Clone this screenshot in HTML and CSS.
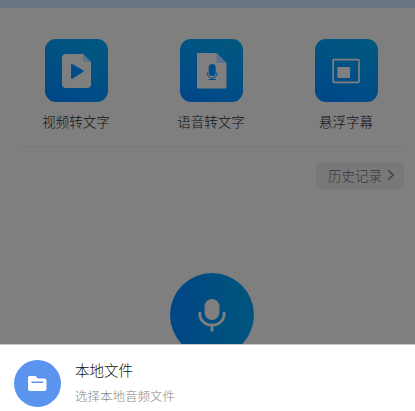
FILE: index.html
```html
<!DOCTYPE html>
<html lang="zh-CN">
<head>
<meta charset="utf-8">
<title>语音转文字</title>
<link rel="stylesheet" href="styles.css">
</head>
<body>
<div class="screen">
  <div class="strip"></div>
  <main class="content">
    <section class="tools">
      <div class="tool">
        <svg class="tile" viewBox="0 0 63 63">
          <path class="paper" d="M21 15H38L46 23V45a4 4 0 0 1-4 4H21a4 4 0 0 1-4-4V19a4 4 0 0 1 4-4Z"/>
          <path class="fold" d="M38 15L46 23H41a3 3 0 0 1-3-3Z"/>
          <path class="mark" d="M26 26.2Q26 24.3 27.7 25.2L38 31.3Q39.2 32.2 38 33.1L27.7 39.6Q26 40.5 26 38.7Z"/>
        </svg>
        <span class="label">视频转文字</span>
      </div>
      <div class="tool">
        <svg class="tile" viewBox="0 0 63 63">
          <path class="paper" d="M18 14H36.5L46.5 24V48.5a1 1 0 0 1-1 1H18a1 1 0 0 1-1-1V15a1 1 0 0 1 1-1Z"/>
          <path class="fold" d="M36.5 14L46.5 24H36.5Z"/>
          <rect class="mark" x="28.7" y="25" width="7" height="12" rx="3.5"/>
          <path class="mark-line" d="M27.3 33.5C27.3 41 37.1 41 37.1 33.5M32.2 39V40.5M28.5 40.5H36"/>
        </svg>
        <span class="label">语音转文字</span>
      </div>
      <div class="tool">
        <svg class="tile" viewBox="0 0 63 63">
          <rect class="frame" x="18.2" y="20.7" width="25.8" height="22.6" rx=".7"/>
          <rect class="paper" x="22.3" y="28" width="12.8" height="11" rx=".7"/>
        </svg>
        <span class="label">悬浮字幕</span>
      </div>
    </section>
    <div class="history">
      <span>历史记录</span>
      <svg class="chevron" viewBox="0 0 8 12"><path d="M1.2 1.2L6.2 6L1.2 10.8"/></svg>
    </div>
    <svg class="record" viewBox="0 0 84 84">
      <rect class="paper" x="34.5" y="26" width="15" height="21" rx="7.5"/>
      <path class="stand" d="M29.8 39V40.5C29.8 56 54.2 56 54.2 40.5V39M42 52V58.5"/>
    </svg>
  </main>
  <section class="sheet">
    <svg class="folder" viewBox="0 0 47 47">
      <path d="M15.5 16H21.5L24 18.5H30.5a2 2 0 0 1 2 2V29a2 2 0 0 1-2 2H16a2 2 0 0 1-2-2V17.5a1.5 1.5 0 0 1 1.5-1.5Z"/>
      <path class="slot" d="M17.5 22.2H29"/>
    </svg>
    <div class="info">
      <div class="title">本地文件</div>
      <div class="subtitle">选择本地音频文件</div>
    </div>
  </section>
</div>
</body>
</html>
```
FILE: styles.css
```css
* { box-sizing: border-box; }
body {
  margin: 0;
  font-family: "Noto Sans CJK SC", sans-serif;
  font-weight: 300;
}
.screen {
  width: 415px;
  height: 411px;
  overflow: hidden;
  display: flex;
  flex-direction: column;
  background: #7f7f7f;
}
.strip { height: 8px; flex: none; background: #6b7483; }
.content {
  height: 336px;
  flex: none;
  overflow: hidden;
  display: flex;
  flex-direction: column;
}
.tools {
  display: flex;
  justify-content: space-between;
  height: 139px;
  flex: none;
  margin: 0 12px 0 20px;
  padding: 31px 25px 0;
  border-bottom: 1px solid #797979;
}
.tool {
  width: 63px;
  display: flex;
  flex-direction: column;
  align-items: center;
}
.tile {
  display: block;
  width: 63px;
  height: 63px;
  flex: none;
  border-radius: 11px;
  background: linear-gradient(25deg, #00468a, #005283 60%, #00597e);
}
.label {
  margin-top: 9px;
  margin-right: 1px;
  font-size: 13.5px;
  line-height: 20px;
  white-space: nowrap;
  color: #111;
}
.paper { fill: #7f7f7f; }
.fold { fill: #587390; }
.mark { fill: #004d8c; }
.mark-line { fill: none; stroke: #004d8c; stroke-width: 1; }
.frame { fill: none; stroke: #7f7f7f; stroke-width: 1.7; }
.history {
  align-self: flex-end;
  flex: none;
  width: 88px;
  height: 27px;
  margin: 15px 11px 0 0;
  padding: 0 0 1px 12px;
  display: flex;
  align-items: center;
  gap: 5px;
  border-radius: 5px;
  background: #787878;
  color: #33363d;
  font-size: 13.5px;
  line-height: 20px;
}
.chevron { width: 8px; height: 12px; fill: none; stroke: #33363d; stroke-width: 1.2; }
.record {
  display: block;
  width: 84px;
  height: 84px;
  flex: none;
  margin: 84px 0 0 169.5px;
  border-radius: 50%;
  background: linear-gradient(90deg, #004685, #00557d);
}
.stand { fill: none; stroke: #7f7f7f; stroke-width: 2.8; }
.sheet {
  flex: 1;
  display: flex;
  padding: 15px 0 0 14px;
  border-top: 1px solid #c8c8c8;
  background: #fff;
}
.folder {
  width: 47px;
  height: 47px;
  flex: none;
  border-radius: 50%;
  background: #5b94ef;
  fill: #fff;
}
.slot { stroke: #5b94ef; stroke-width: 1.6; }
.info { margin-left: 14px; }
.title { font-size: 14.5px; line-height: 20px; color: #111; }
.subtitle { margin-top: 6px; font-size: 12.5px; line-height: 20px; color: #888; }
```
